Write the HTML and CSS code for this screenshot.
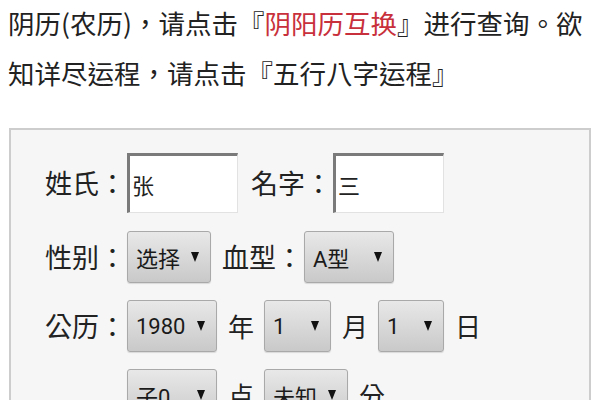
FILE: index.html
```html
<!DOCTYPE html>
<html lang="zh-TW">
<head>
<meta charset="utf-8">
<title>八字查询</title>
<link rel="stylesheet" href="styles.css">
</head>
<body>
<p class="intro">阴历(农历)，请点击『<span class="hl">阴阳历互换</span>』进行查询。欲<br>知详尽运程，请点击『五行八字运程』</p>
<form class="box">
  <div class="row first">
    <span class="lab">姓氏：</span>
    <input class="txt" type="text" value="张">
    <span class="lab">名字：</span>
    <input class="txt" type="text" value="三">
  </div>
  <div class="row">
    <span class="lab">性别：</span>
    <div class="sel w84"><span>选择</span><i class="arr"></i></div>
    <span class="lab">血型：</span>
    <div class="sel w90"><span>A型</span><i class="arr"></i></div>
  </div>
  <div class="row">
    <span class="lab">公历：</span>
    <div class="sel w90"><span>1980</span><i class="arr"></i></div>
    <span class="unit">年</span>
    <div class="sel w67"><span>1</span><i class="arr"></i></div>
    <span class="unit">月</span>
    <div class="sel w66"><span>1</span><i class="arr"></i></div>
    <span class="unit">日</span>
  </div>
  <div class="row">
    <span class="lab"></span>
    <div class="sel w90"><span>子0</span><i class="arr"></i></div>
    <span class="unit">点</span>
    <div class="sel w84"><span>未知</span><i class="arr"></i></div>
    <span class="unit">分</span>
  </div>
</form>
</body>
</html>
```
FILE: styles.css
```css
html, body {
  margin: 0;
  padding: 0;
  background: #ffffff;
  overflow: hidden;
}
body {
  font-family: Roboto, "Noto Sans CJK TC", sans-serif;
  color: #222222;
}
.intro {
  margin: -2px 0 0 0;
  padding: 0 0 0 8px;
  font-family: "Noto Sans CJK TC", sans-serif;
  font-size: 26.5px;
  line-height: 50px;
  white-space: nowrap;
}
.hl {
  color: #c8303b;
}
.box {
  margin: 30px 9px 0 9px;
  height: 340px;
  background: #f6f6f6;
  border: 2px solid #cdcdcd;
  padding: 23px 0 0 34px;
  display: flex;
  flex-direction: column;
  gap: 17px;
}
.row {
  display: flex;
  align-items: center;
}
.row.first {
  margin-bottom: 1px;
}
.lab {
  width: 82px;
  flex: none;
  font-family: "Noto Sans CJK TC", sans-serif;
  font-size: 27px;
  line-height: 30px;
  white-space: nowrap;
}
.unit {
  width: 27px;
  flex: none;
  margin-right: 9px;
  font-family: "Noto Sans CJK TC", sans-serif;
  font-size: 26px;
  line-height: 30px;
}
.txt {
  box-sizing: border-box;
  width: 111px;
  height: 60px;
  margin: 0 13px 0 0;
  padding: 0 0 0 2px;
  background: #ffffff;
  border-style: solid;
  border-width: 3px 1px 1px 3px;
  border-color: #7a7a7a #e2e2e2 #e2e2e2 #7a7a7a;
  font-family: "Noto Sans CJK TC", sans-serif;
  font-size: 22px;
  color: #222222;
  outline: none;
}
.sel {
  box-sizing: border-box;
  height: 52px;
  margin-right: 11px;
  padding: 0 11px 0 8px;
  display: flex;
  align-items: center;
  justify-content: space-between;
  flex: none;
  border: 1px solid #a9a9a9;
  border-radius: 3px;
  background: linear-gradient(#e8e8e8, #c9c9c9);
  box-shadow: 0 1px 1px rgba(0, 0, 0, 0.12);
  font-size: 22px;
  color: #1a1a1a;
}
.w84 { width: 84px; }
.w90 { width: 90px; }
.w67 { width: 67px; }
.w66 { width: 66px; }
.arr {
  width: 0;
  height: 0;
  border-left: 4.5px solid transparent;
  border-right: 4.5px solid transparent;
  border-top: 10px solid #111111;
}
```
